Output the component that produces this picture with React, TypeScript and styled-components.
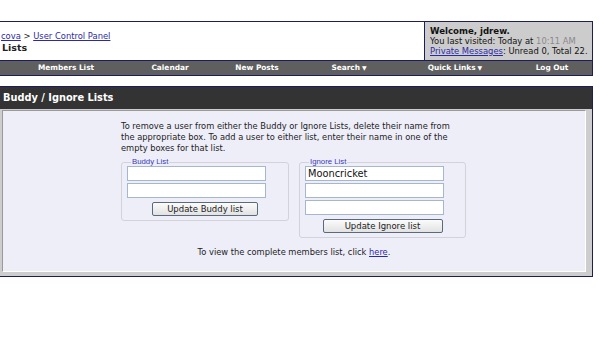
import styled, { createGlobalStyle } from 'styled-components'

const navy = '#1d1d5e'

const GlobalStyle = createGlobalStyle`
  body {
    margin: 0;
    background: #fff;
    font-family: "DejaVu Sans", Verdana, sans-serif;
    color: #222;
    overflow: hidden;
  }
`

const navItems = [
  { label: 'Members List', w: 138 },
  { label: 'Calendar', w: 70 },
  { label: 'New Posts', w: 104 },
  { label: 'Search', w: 80, menu: true },
  { label: 'Quick Links', w: 132, menu: true },
  { label: 'Log Out', w: 62 },
]

function App() {
  return (
    <Page>
      <GlobalStyle />
      <Header>
        <Crumbs>
          <Trail>
            <Link href="#">cova</Link> &gt; <Link href="#">User Control Panel</Link>
          </Trail>
          <PageTitle>Lists</PageTitle>
        </Crumbs>
        <Welcome>
          <strong>Welcome, jdrew.</strong>
          <div>
            You last visited: Today at <Time>10:11 AM</Time>
          </div>
          <div>
            <Link href="#">Private Messages</Link>: Unread 0, Total 22.
          </div>
        </Welcome>
      </Header>

      <NavBar>
        {navItems.map((n) => (
          <NavCell key={n.label} $w={n.w}>
            {n.label}
            {n.menu && <Caret>▼</Caret>}
          </NavCell>
        ))}
      </NavBar>

      <PanelHead>Buddy / Ignore Lists</PanelHead>
      <PanelBody>
        <Inner>
          <Block>
            <Intro>
              To remove a user from either the Buddy or Ignore Lists, delete their name from
              <br />
              the appropriate box. To add a user to either list, enter their name in one of the
              <br />
              empty boxes for that list.
            </Intro>
            <Columns>
              <ListBox $w={168}>
                <Legend>Buddy List</Legend>
                <Field />
                <Field />
                <ButtonRow>
                  <Button $w={106}>Update Buddy list</Button>
                </ButtonRow>
              </ListBox>
              <ListBox $w={167}>
                <Legend>Ignore List</Legend>
                <Field defaultValue="Mooncricket" />
                <Field />
                <Field />
                <ButtonRow>
                  <Button $w={120}>Update Ignore list</Button>
                </ButtonRow>
              </ListBox>
            </Columns>
          </Block>
          <Footer>
            To view the complete members list, click <Link href="#">here</Link>.
          </Footer>
        </Inner>
      </PanelBody>
    </Page>
  )
}

export default App

const Page = styled.div`
  margin-left: -4px;
  width: 597px;
  padding-top: 21px;
`

const Link = styled.a`
  color: #2a2aa8;
  text-decoration: underline;
`

const Header = styled.div`
  display: flex;
  height: 38px;
  border: 1px solid ${navy};
  border-bottom: none;
`

const Crumbs = styled.div`
  flex: 1;
  padding: 9px 4px 0;
`

const Trail = styled.div`
  font-size: 8.4px;
  line-height: 10px;
`

const PageTitle = styled.div`
  font-size: 9.5px;
  font-weight: bold;
  line-height: 13px;
  margin-left: 1px;
`

const Welcome = styled.div`
  width: 162px;
  background: #cccccc;
  border-left: 1px solid ${navy};
  padding: 4px 0 0 5px;
  font-size: 8.4px;
  line-height: 10px;
  color: #111;
  white-space: nowrap;

  strong {
    font-size: 8.6px;
  }
`

const Time = styled.span`
  color: #8a8a8a;
`

const NavBar = styled.div`
  display: flex;
  height: 14px;
  background: #5f5f5f;
  border: 1px solid ${navy};
`

const NavCell = styled.div<{ $w: number }>`
  width: ${(p) => p.$w}px;
  text-align: center;
  color: #fff;
  font-size: 7.4px;
  font-weight: bold;
  line-height: 14px;
  white-space: nowrap;
`

const Caret = styled.span`
  font-size: 6px;
  margin-left: 2px;
`

const PanelHead = styled.div`
  margin-top: 10px;
  height: 22px;
  background: #333333;
  border: 1px solid ${navy};
  border-bottom: none;
  color: #fff;
  font-size: 9.8px;
  font-weight: bold;
  line-height: 22px;
  padding-left: 6px;
`

const PanelBody = styled.div`
  background: #cdcdcd;
  border: 1px solid ${navy};
  border-top: none;
  padding: 1px 6px 4px 5px;
`

const Inner = styled.div`
  background: #eeeef9;
  border: 1px solid;
  border-color: #9a9a9a #ffffff #ffffff #9a9a9a;
  padding: 10px 0 13px;
  display: flex;
  flex-direction: column;
  align-items: center;
`

const Block = styled.div`
  width: 346px;
`

const Intro = styled.div`
  font-size: 8.3px;
  line-height: 11px;
  color: #222;
  white-space: nowrap;
`

const Columns = styled.div`
  display: flex;
  align-items: flex-start;
  gap: 10px;
  margin-top: 4px;
`

const ListBox = styled.fieldset<{ $w: number }>`
  box-sizing: border-box;
  width: ${(p) => p.$w}px;
  margin: 0;
  border: 1px solid #d2d2d8;
  border-radius: 3px;
  padding: 0 0 4px 5px;
  display: flex;
  flex-direction: column;
  gap: 2px;
`

const Legend = styled.legend`
  font-family: "Liberation Sans", Arial, sans-serif;
  font-size: 7.8px;
  color: #3a3ab8;
  padding: 0 1px;
  margin-left: 4px;
  line-height: 8px;
`

const Field = styled.input`
  box-sizing: border-box;
  width: 139px;
  height: 15px;
  margin: 0;
  border: 1px solid #a6b6cc;
  background: #fff;
  font-family: "DejaVu Sans", Verdana, sans-serif;
  font-size: 9.8px;
  padding: 0 2px;
  color: #111;
  outline: none;
`

const ButtonRow = styled.div`
  display: flex;
  justify-content: center;
  padding-right: 5px;
  margin-top: 2px;
`

const Button = styled.button<{ $w: number }>`
  width: ${(p) => p.$w}px;
  height: 14px;
  padding: 0;
  border: 1px solid #5a6a7a;
  border-radius: 2px;
  background: linear-gradient(#fbfbfb, #e2e2e2);
  font-family: "DejaVu Sans", Verdana, sans-serif;
  font-size: 8.5px;
  color: #222;
  line-height: 12px;
`

const Footer = styled.div`
  margin-top: 9px;
  font-size: 8.3px;
  line-height: 11px;
`
